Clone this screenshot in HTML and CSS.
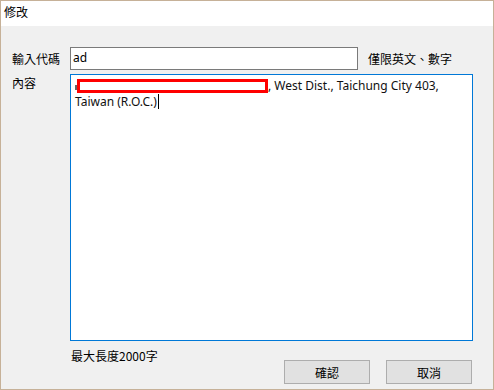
FILE: index.html
```html
<!DOCTYPE html>
<html>
<head>
<meta charset="utf-8">
<link rel="stylesheet" href="styles.css">
</head>
<body>
<div class="window">
  <div class="titlebar">修改</div>
  <div class="content">
    <div class="row row-code">
      <label class="label">輸入代碼</label>
      <div class="input">ad</div>
      <span class="hint">僅限英文、數字</span>
    </div>
    <div class="row row-body">
      <label class="label">內容</label>
      <div class="textarea">
        <span class="frag"></span><span class="redact"></span>, West Dist., Taichung City 403, Taiwan (R.O.C.)<span class="caret"></span>
      </div>
    </div>
    <div class="footer">
      <span class="note">最大長度2000字</span>
      <div class="buttons">
        <button class="btn">確認</button>
        <button class="btn">取消</button>
      </div>
    </div>
  </div>
</div>
</body>
</html>
```
FILE: styles.css
```css
* { box-sizing: border-box; }
html, body { margin: 0; padding: 0; }
body {
  width: 494px;
  height: 390px;
  font-family: "Noto Sans", "Noto Sans CJK TC", sans-serif;
  font-size: 12px;
  color: #000;
  background: #f0f0f0;
}
.window {
  width: 494px;
  height: 390px;
  border: 1px solid #c6b198;
  display: flex;
  flex-direction: column;
  background: #f0f0f0;
}
.titlebar {
  height: 25px;
  background: #fff;
  padding-left: 3px;
  line-height: 22px;
  font-family: "Noto Sans CJK TC", sans-serif;
}
.content {
  flex: 1;
  padding: 21px 20px 0 11px;
}
.row { display: flex; }
.label {
  width: 58px;
  font-family: "Noto Sans CJK TC", sans-serif;
  line-height: 16px;
}
.row-code { align-items: center; height: 23px; }
.input {
  width: 288px;
  height: 23px;
  border: 1px solid #7a7a7a;
  background: #fff;
  padding: 0 0 0 2px;
  line-height: 20px;
}
.hint {
  margin-left: 10px;
  font-family: "Noto Sans CJK TC", sans-serif;
}
.row-body { margin-top: 4px; }
.row-body .label { padding-top: 1px; }
.textarea {
  width: 403px;
  height: 267px;
  border: 1px solid #0078d7;
  background: #fff;
  padding: 3px 4px;
  line-height: 16px;
  color: #111;
}
.frag {
  display: inline-block;
  width: 2px;
  height: 5px;
  background: #666;
  vertical-align: 0;
}
.redact {
  display: inline-block;
  width: 191px;
  height: 14px;
  border: 3px solid #ff0000;
  background: #fff;
  vertical-align: -3px;
}
.caret {
  display: inline-block;
  width: 1px;
  height: 15px;
  background: #000;
  margin-left: 1px;
  vertical-align: -3px;
}
.footer {
  display: flex;
  align-items: flex-start;
  padding-left: 59px;
  margin-top: 7px;
}
.note {
  line-height: 16px;
  font-family: "Noto Sans CJK TC", sans-serif;
}
.buttons {
  margin-left: auto;
  margin-right: 1px;
  margin-top: 12px;
  display: flex;
  gap: 16px;
}
.btn {
  width: 86px;
  height: 24px;
  border: 1px solid #adadad;
  background: #e1e1e1;
  font-family: "Noto Sans CJK TC", sans-serif;
  font-size: 12px;
  padding: 0;
  color: #000;
}
```
